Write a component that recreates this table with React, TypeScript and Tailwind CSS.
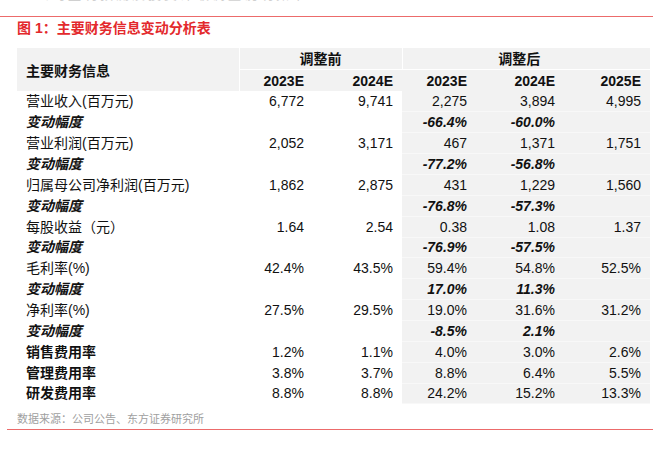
type Row = {
  label: string;
  kind: "main" | "chg" | "bold";
  vals: string[];
};

const rows: Row[] = [
  { label: "营业收入(百万元)", kind: "main", vals: ["6,772", "9,741", "2,275", "3,894", "4,995"] },
  { label: "变动幅度", kind: "chg", vals: ["", "", "-66.4%", "-60.0%", ""] },
  { label: "营业利润(百万元)", kind: "main", vals: ["2,052", "3,171", "467", "1,371", "1,751"] },
  { label: "变动幅度", kind: "chg", vals: ["", "", "-77.2%", "-56.8%", ""] },
  { label: "归属母公司净利润(百万元)", kind: "main", vals: ["1,862", "2,875", "431", "1,229", "1,560"] },
  { label: "变动幅度", kind: "chg", vals: ["", "", "-76.8%", "-57.3%", ""] },
  { label: "每股收益（元）", kind: "main", vals: ["1.64", "2.54", "0.38", "1.08", "1.37"] },
  { label: "变动幅度", kind: "chg", vals: ["", "", "-76.9%", "-57.5%", ""] },
  { label: "毛利率(%)", kind: "main", vals: ["42.4%", "43.5%", "59.4%", "54.8%", "52.5%"] },
  { label: "变动幅度", kind: "chg", vals: ["", "", "17.0%", "11.3%", ""] },
  { label: "净利率(%)", kind: "main", vals: ["27.5%", "29.5%", "19.0%", "31.6%", "31.2%"] },
  { label: "变动幅度", kind: "chg", vals: ["", "", "-8.5%", "2.1%", ""] },
  { label: "销售费用率", kind: "bold", vals: ["1.2%", "1.1%", "4.0%", "3.0%", "2.6%"] },
  { label: "管理费用率", kind: "bold", vals: ["3.8%", "3.7%", "8.8%", "6.4%", "5.5%"] },
  { label: "研发费用率", kind: "bold", vals: ["8.8%", "8.8%", "24.2%", "15.2%", "13.3%"] },
];

const years = ["2023E", "2024E", "2023E", "2024E", "2025E"];

function labelClass(kind: Row["kind"]) {
  if (kind === "chg") return "font-bold italic";
  if (kind === "bold") return "font-bold";
  return "";
}

export default function App() {
  return (
    <div
      className="w-[665px] h-[453px] bg-white text-[#111] overflow-hidden"
      style={{ fontFamily: '"Liberation Sans", "Noto Sans CJK SC", sans-serif' }}
    >
      {/* tail of the previous paragraph, cut off by the crop */}
      <div className="h-[3px] overflow-hidden pl-[36px] text-[13px] leading-[14px] text-[#d0d0d0]">
        <div className="-mt-[12px] tracking-[3px]">公司盈利预测及投资评级调整说明如下</div>
      </div>

      <div className="mt-[13px] h-px w-[653px] bg-[#ec6b6b]" />

      <div className="mt-[3px] pl-[17px] text-[14px] leading-[17px] font-bold text-[#e3292c]">
        图 1：主要财务信息变动分析表
      </div>

      <table className="mt-[11px] ml-[17px] table-fixed border-collapse text-[14px] leading-[16px]">
        <colgroup>
          <col className="w-[222px]" />
          <col className="w-[74px]" />
          <col className="w-[89px]" />
          <col className="w-[74px]" />
          <col className="w-[88px]" />
          <col className="w-[86px]" />
        </colgroup>
        <thead>
          <tr className="h-[21px] bg-[#f2f2f2]">
            <th rowSpan={2} className="text-left font-bold pl-[9px] pt-[2px]">
              主要财务信息
            </th>
            <th colSpan={2} className="font-bold text-center border-l border-b border-white pt-[1px]">
              调整前
            </th>
            <th colSpan={3} className="font-bold text-center border-l border-b border-white pt-[1px] pr-[14px]">
              调整后
            </th>
          </tr>
          <tr className="h-[22px] bg-[#f2f2f2]">
            {years.map((y, i) => (
              <th
                key={i}
                className={`font-bold text-right pr-[9px] pt-[1px] ${i === 0 ? "border-l border-white" : ""}`}
              >
                {y}
              </th>
            ))}
          </tr>
        </thead>
        <tbody>
          {rows.map((r, ri) => (
            <tr key={ri} className="h-[20.87px]">
              <td className={`pl-[9px] whitespace-nowrap ${labelClass(r.kind)}`}>{r.label}</td>
              {r.vals.map((v, i) => (
                <td
                  key={i}
                  className={`text-right pr-[9px] whitespace-nowrap ${i >= 2 ? "bg-[#f2f2f2] border-b border-[#f8f8f8]" : ""} ${
                    r.kind === "chg" ? "font-bold italic" : ""
                  }`}
                >
                  {v}
                </td>
              ))}
            </tr>
          ))}
        </tbody>
      </table>

      <div className="mt-[8px] pl-[17px] text-[11px] leading-[14px] text-[#a0a0a0]">
        数据来源：公司公告、东方证券研究所
      </div>

      <div className="mt-[3px] ml-[7px] h-px w-[646px] bg-[#ec6b6b]" />
    </div>
  );
}
